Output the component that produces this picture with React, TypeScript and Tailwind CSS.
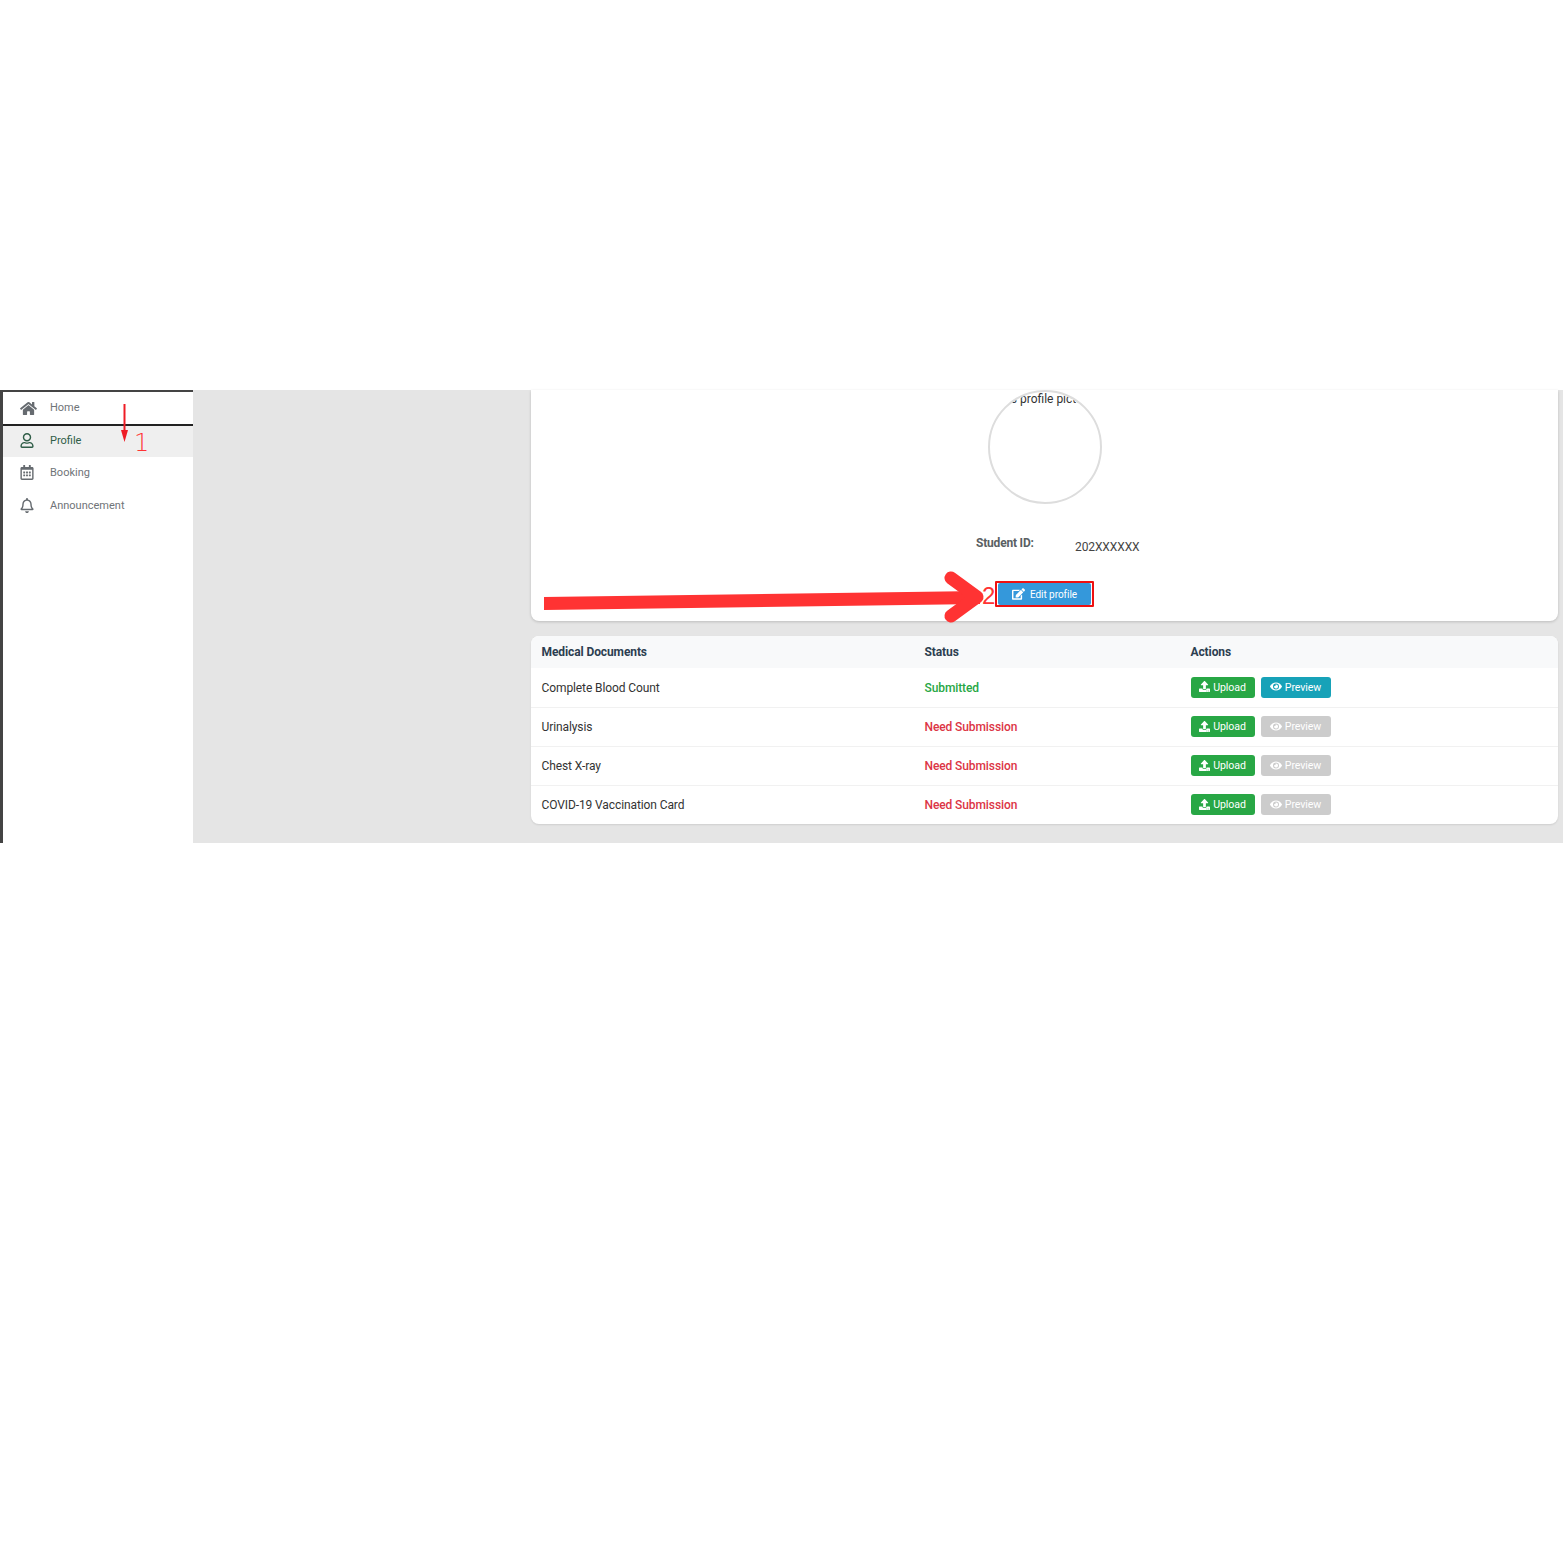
import React from 'react';
import { FaHome, FaRegUser, FaRegCalendarAlt, FaRegBell, FaUpload, FaEye, FaEdit } from 'react-icons/fa';

const docs = [
	{ name: 'Complete Blood Count', status: 'Submitted', ok: true },
	{ name: 'Urinalysis', status: 'Need Submission', ok: false },
	{ name: 'Chest X-ray', status: 'Need Submission', ok: false },
	{ name: 'COVID-19 Vaccination Card', status: 'Need Submission', ok: false },
];

const Sidebar: React.FC = () => (
	<aside className="w-[193px] shrink-0 bg-white border-l-[3px] border-t-2 border-[#444444] text-[11px] text-[#6f7478]">
		<div className="h-[32px] flex items-center pl-[17px] border-b-2 border-[#222222] box-content">
			<FaHome className="w-[17px] h-[15px] text-[#666b70]" />
			<span className="ml-[13px]">Home</span>
		</div>
		<div className="h-[31px] flex items-center pl-[17px] bg-[#efefef] text-[#2f5d47]">
			<FaRegUser className="w-[14px] h-[15px] -mt-[2px]" />
			<span className="ml-[16px]">Profile</span>
		</div>
		<div className="h-[32px] flex items-center pl-[17px]">
			<FaRegCalendarAlt className="w-[14px] h-[15px] text-[#666b70] -mt-[2px]" />
			<span className="ml-[16px]">Booking</span>
		</div>
		<div className="h-[34px] flex items-center pl-[17px]">
			<FaRegBell className="w-[14px] h-[15px] text-[#666b70] -mt-[1px]" />
			<span className="ml-[16px]">Announcement</span>
		</div>
	</aside>
);

const ProfileCard: React.FC = () => (
	<section className="h-[231px] bg-white rounded-b-lg shadow-[0_1px_3px_rgba(0,0,0,0.18)] flex flex-col items-center">
		<div className="w-[114px] h-[114px] rounded-full border-2 border-[#dddddd] overflow-hidden flex justify-center">
			<span className="whitespace-nowrap text-[12px] leading-[14px] text-[#333333] -ml-[28px]">Student's profile picture</span>
		</div>
		<div className="mt-[31px] w-[164px] flex items-start text-[12px] text-[#444444] ml-[27px]">
			<span className="w-[99px] font-bold text-[#5a5f63] leading-[16px] tracking-[-0.2px]">Student ID:</span>
			<span className="mt-[4px] leading-[16px] tracking-[-0.1px]">202XXXXXX</span>
		</div>
		<div className="mt-[26px] border-2 border-[#ee1111] px-px rounded-[1px]">
			<button className="w-[93px] h-[22px] bg-[#3498db] text-white text-[10px] tracking-[-0.05px] rounded-[2px] flex items-center justify-center gap-[5px]">
				<FaEdit className="w-[13px] h-[12px]" />
				<span className="pt-px">Edit profile</span>
			</button>
		</div>
	</section>
);

const DocsTable: React.FC = () => (
	<section className="mt-[15px] bg-white rounded-lg overflow-hidden shadow-[0_1px_2px_rgba(0,0,0,0.1)]">
		<table className="w-full table-fixed border-collapse text-[12px] tracking-[-0.1px] text-left">
			<thead className="bg-[#f8f9fa] text-[#2c3e50]">
				<tr className="h-[32px]">
					<th className="w-[383px] pl-[10.5px] font-bold">Medical Documents</th>
					<th className="w-[266px] pl-[10.5px] font-bold">Status</th>
					<th className="pl-[10.5px] font-bold">Actions</th>
				</tr>
			</thead>
			<tbody>
				{ docs.map((doc, i) => (
					<tr key={ doc.name } className="h-[39px] border-b border-[#f1f1f1] last:border-b-0 text-[#333333]">
						<td className={ i === 0 ? 'pl-[10.5px] pt-[2px]' : 'pl-[10.5px]' }>{ doc.name }</td>
						<td className={ doc.ok ? 'pl-[10.5px] pt-[2px] font-medium text-[#28a745]' : 'pl-[10.5px] font-medium text-[#dc3545]' }>
							{ doc.status }
						</td>
						<td className="pl-[10.5px]">
							<div className="flex gap-[6px] text-[10.6px] text-white">
								<button className="w-[64px] h-[21px] bg-[#28a745] rounded-[3px] flex items-center justify-center gap-[3px]">
									<FaUpload className="w-[11px] h-[11px] -mt-px" />
									<span className="pt-px">Upload</span>
								</button>
								<button className={ doc.ok
									? 'w-[70px] h-[21px] bg-[#17a2b8] rounded-[3px] flex items-center justify-center gap-[3px]'
									: 'w-[70px] h-[21px] bg-[#cccccc] rounded-[3px] flex items-center justify-center gap-[3px]' }>
									<FaEye className="w-[12px] h-[11px] -mt-px" />
									<span className="pt-px">Preview</span>
								</button>
							</div>
						</td>
					</tr>
				)) }
			</tbody>
		</table>
	</section>
);

export default function App() {
	return (
		<div className="min-h-[1563px] bg-white pt-[390px] font-['Roboto',sans-serif]">
			<div className="relative h-[453px] flex bg-[#e5e5e5]">
				<Sidebar />
				<main className="flex-1 pl-[338px] pr-[5px]">
					<ProfileCard />
					<DocsTable />
				</main>

				{/* annotations drawn over the screenshot */}
				<svg className="absolute left-0 top-0 pointer-events-none" width="1563" height="453">
					<line x1="124.5" y1="14" x2="124.5" y2="42" stroke="#ee1c25" strokeWidth="2" />
					<polygon points="121,40 128,40 124.5,52" fill="#ee1c25" />
					<polygon points="544,207 980,201 980,214 544,220" fill="#ff3333" />
					<polyline points="951,188 977,207 951,226" fill="none" stroke="#ff3333" strokeWidth="13" strokeLinecap="round" strokeLinejoin="round" />
				</svg>
				<span className="absolute left-[134px] top-[39px] text-[24px] leading-[28px] text-[#ff3333] font-['DejaVu_Sans',sans-serif] font-extralight">1</span>
				<span className="absolute left-[982px] top-[192px] text-[24px] leading-[28px] text-[#ff3333] font-['Liberation_Sans',sans-serif]">2</span>
			</div>
		</div>
	);
}
